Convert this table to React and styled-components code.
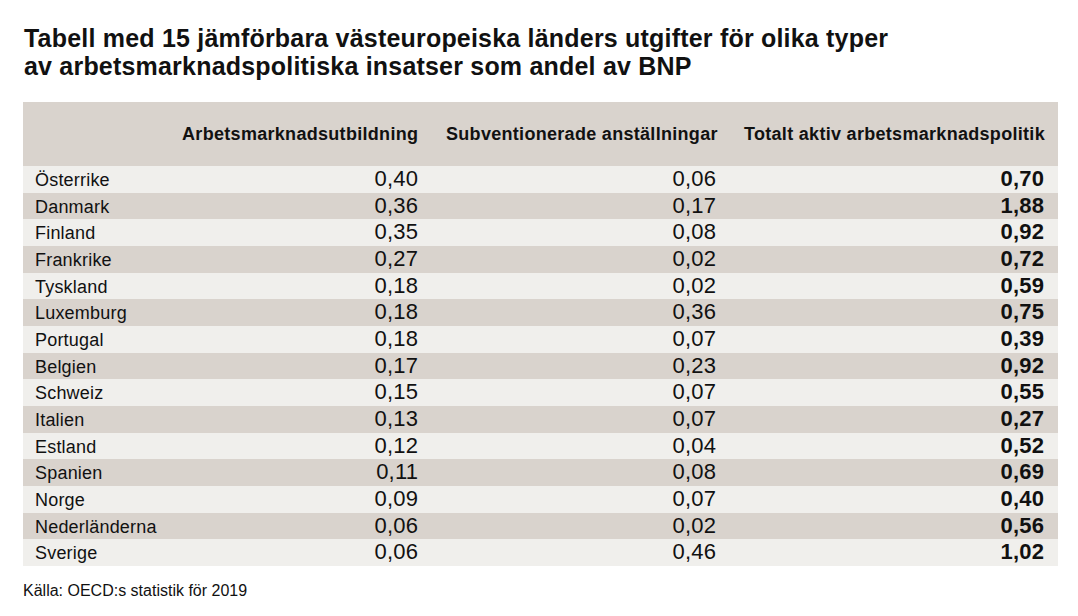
import React from 'react'
import styled, { createGlobalStyle } from 'styled-components'

const GlobalStyle = createGlobalStyle`
  html, body{
    margin: 0;
    padding: 0;
    background: #ffffff;
  }
  body{
    font-family: "Liberation Sans", Arial, sans-serif;
    color: #000000;
  }
`;

const Page = styled.main`
  width: 1078px;
  padding: 24px 20px 0 23px;
  box-sizing: border-box;
`;

const Title = styled.h1`
  margin: 0 0 22px 1px;
  font-size: 25px;
  line-height: 28px;
  letter-spacing: 0.2px;
  font-weight: 700;
  color: #111;
`;

const Table = styled.div`
  width: 1035px;
`;

const Row = styled.div`
  display: grid;
  grid-template-columns: minmax(0, 1fr) 236px 270px 300px;
  column-gap: 28px;
  padding: 0 14px 0 12px;
  align-items: ${p => (p.$head ? 'center' : 'baseline')};
  height: ${p => (p.$head ? '64px' : '26.67px')};
  background: ${p => (p.$light ? '#f0efec' : '#d9d3cd')};
  line-height: 26px;
`;

const HeadCell = styled.div`
  font-size: 18px;
  letter-spacing: 0.3px;
  font-weight: 700;
  text-align: right;
  white-space: nowrap;
  color: #111;
  margin-right: -0.3px;
`;

const Name = styled.div`
  font-size: 18px;
  letter-spacing: 0.2px;
  white-space: nowrap;
  color: #111;
`;

const Num = styled.div`
  font-size: 22px;
  letter-spacing: 0.2px;
  margin-right: -0.2px;
  text-align: right;
  font-weight: ${p => (p.$bold ? 700 : 400)};
  color: #111;
`;

const Source = styled.p`
  margin: 16px 0 0 0;
  font-size: 16px;
  line-height: 18px;
  color: #111;
`;

const rows = [
  ['Österrike', '0,40', '0,06', '0,70'],
  ['Danmark', '0,36', '0,17', '1,88'],
  ['Finland', '0,35', '0,08', '0,92'],
  ['Frankrike', '0,27', '0,02', '0,72'],
  ['Tyskland', '0,18', '0,02', '0,59'],
  ['Luxemburg', '0,18', '0,36', '0,75'],
  ['Portugal', '0,18', '0,07', '0,39'],
  ['Belgien', '0,17', '0,23', '0,92'],
  ['Schweiz', '0,15', '0,07', '0,55'],
  ['Italien', '0,13', '0,07', '0,27'],
  ['Estland', '0,12', '0,04', '0,52'],
  ['Spanien', '0,11', '0,08', '0,69'],
  ['Norge', '0,09', '0,07', '0,40'],
  ['Nederländerna', '0,06', '0,02', '0,56'],
  ['Sverige', '0,06', '0,46', '1,02'],
];

const App = () => {
  return (
    <>
      <GlobalStyle />
      <Page>
        <Title>
          Tabell med 15 jämförbara västeuropeiska länders utgifter för olika typer
          <br />
          av arbetsmarknadspolitiska insatser som andel av BNP
        </Title>
        <Table>
          <Row $head>
            <div />
            <HeadCell>Arbetsmarknadsutbildning</HeadCell>
            <HeadCell>Subventionerade anställningar</HeadCell>
            <HeadCell>Totalt aktiv arbetsmarknadspolitik</HeadCell>
          </Row>
          {rows.map(([name, a, b, total], i) => (
            <Row key={name} $light={i % 2 === 0}>
              <Name>{name}</Name>
              <Num>{a}</Num>
              <Num>{b}</Num>
              <Num $bold>{total}</Num>
            </Row>
          ))}
        </Table>
        <Source>Källa: OECD:s statistik för 2019</Source>
      </Page>
    </>
  )
}

export default App
